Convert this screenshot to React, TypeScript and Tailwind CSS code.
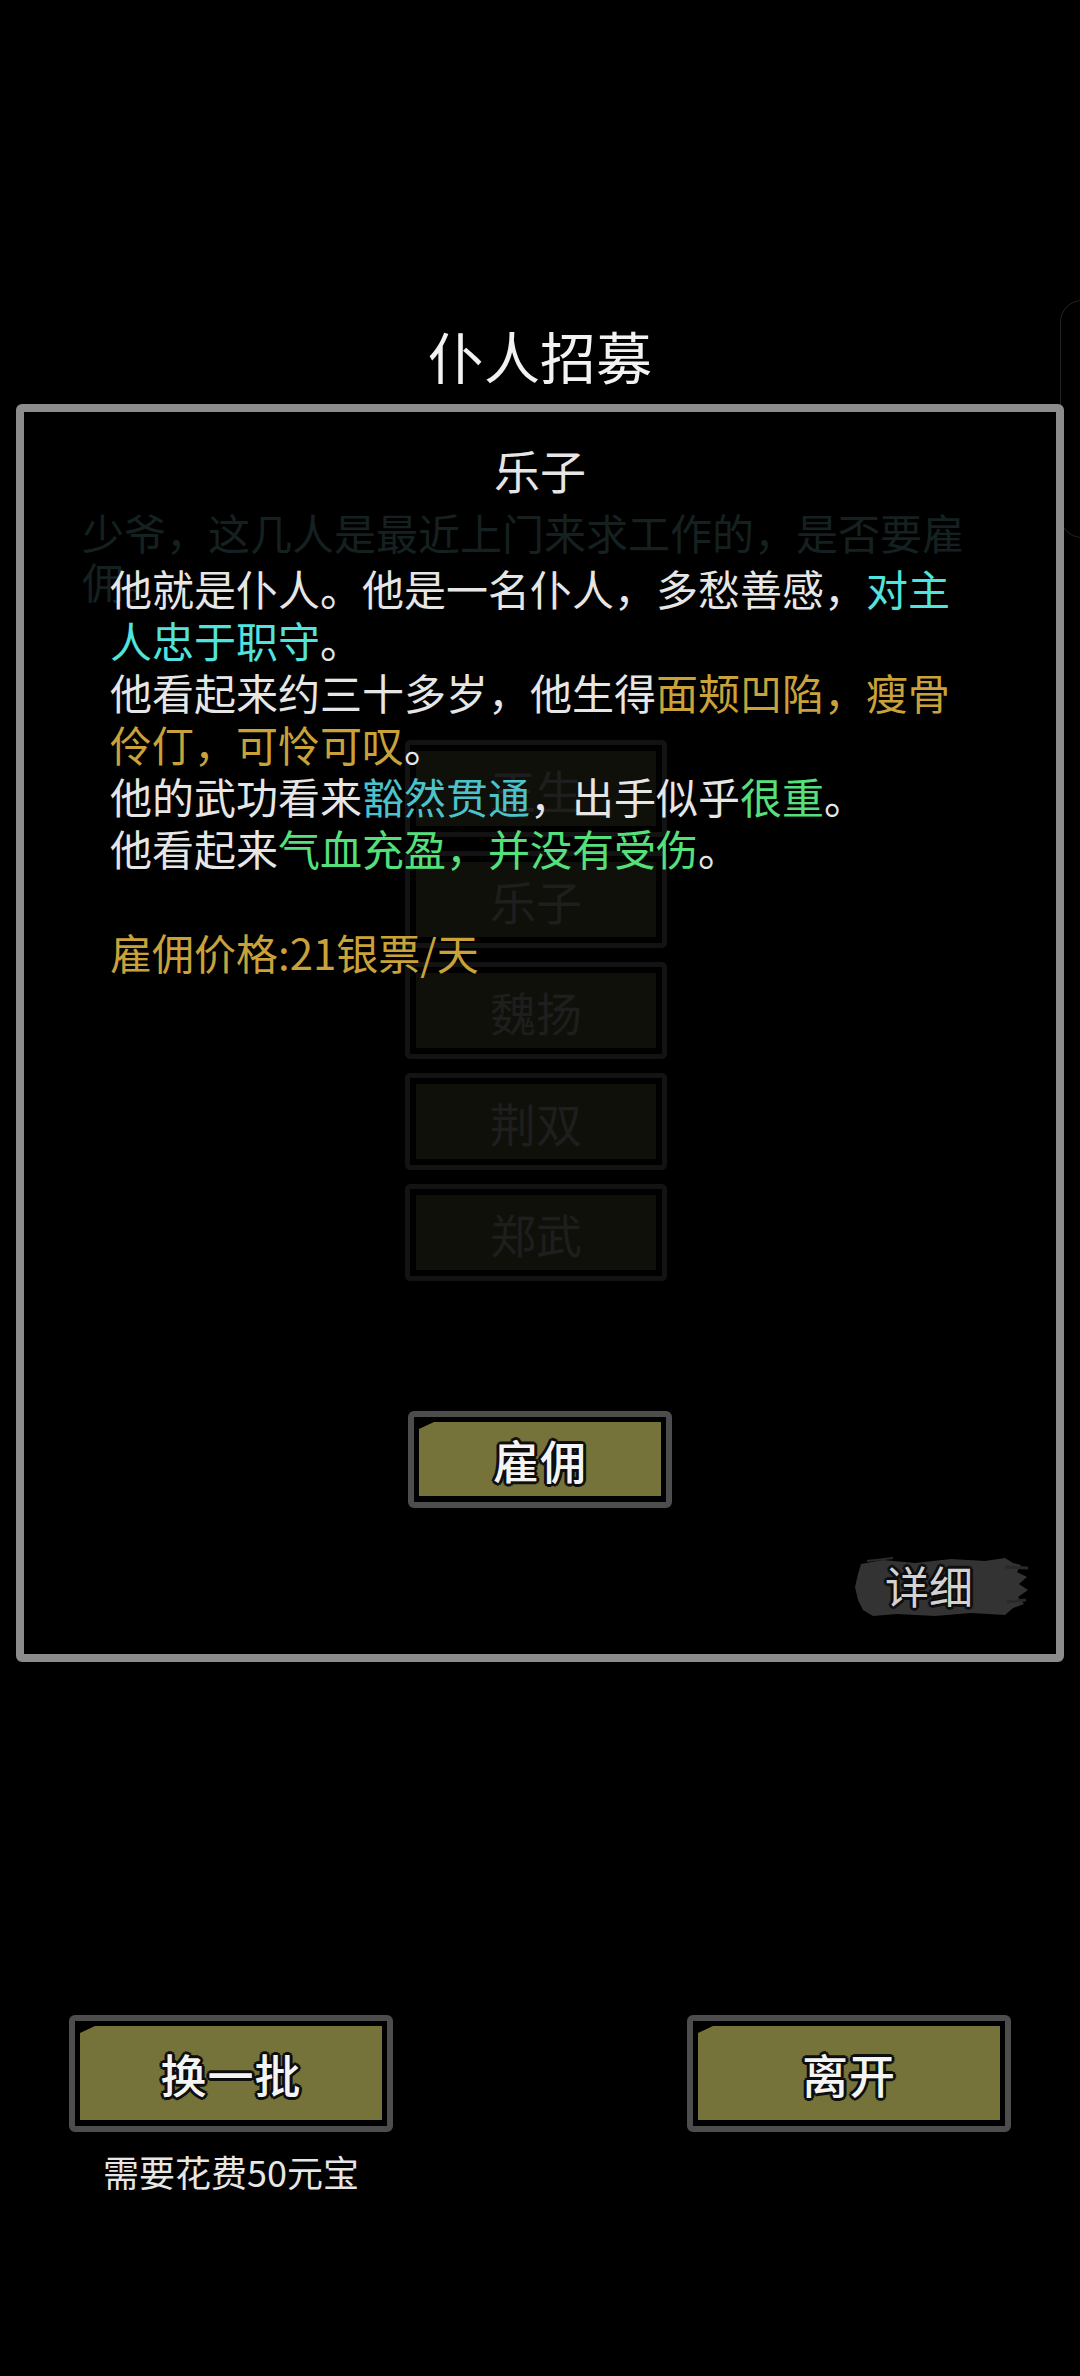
import React from "react";

const outline =
  "[text-shadow:0_0_3px_#000,3px_0_0_#111,-3px_0_0_#111,0_3px_0_#111,0_-3px_0_#111,2px_2px_0_#111,-2px_-2px_0_#111,2px_-2px_0_#111,-2px_2px_0_#111]";

function GameButton({
  label,
  outerClass,
}: {
  label: string;
  outerClass: string;
}) {
  return (
    <div
      className={
        "border-[6px] border-[#4d4d4d] rounded-[6px] bg-black pt-[5px] px-[5px] pb-[6px] flex " +
        outerClass
      }
    >
      <div className="flex-1 bg-[#76733a] [clip-path:polygon(15px_0,100%_0,100%_100%,0_100%,0_7px)] flex items-center justify-center">
        <span
          className={
            "text-[46px] leading-none font-medium text-[#f4f4f4] tracking-[1px] " +
            outline
          }
        >
          {label}
        </span>
      </div>
    </div>
  );
}

function FadedBox({ label }: { label: string }) {
  return (
    <div className="w-[262px] h-[97px] border-[5px] border-[#131313] rounded-[5px] p-[6px] flex">
      <div className="flex-1 bg-[#10100a] flex items-center justify-center">
        <span className="text-[46px] leading-none text-[#1e1e1e]">{label}</span>
      </div>
    </div>
  );
}

export default function App() {
  const gold = "text-[#c9a23a]";
  return (
    <div className="relative w-[1080px] h-[2376px] bg-black overflow-hidden flex flex-col font-['Noto_Sans_CJK_SC','Noto_Sans',sans-serif]">
      {/* faint side element at right edge */}
      <div className="absolute left-[1060px] top-[300px] w-[60px] h-[238px] rounded-[22px] border border-[#242424]" />

      <div className="mt-[322px] h-[66px] leading-[66px] text-center text-[56px] text-[#f2f2f2]">
        仆人招募
      </div>

      <div className="mt-[16px] ml-[16px] w-[1048px] h-[1258px] border-8 border-[#8c8c8c] rounded-[6px] relative flex flex-col">
        {/* faded background layer */}
        <div className="absolute inset-0 pointer-events-none">
          <p className="absolute left-[58px] top-[95px] w-[890px] text-[42px] leading-[49px] text-[#152020]">
            少爷，这几人是最近上门来求工作的，是否要雇佣。
          </p>
          <div className="absolute left-[381px] top-[328px] flex flex-col gap-[14px]">
            <FadedBox label="王生" />
            <FadedBox label="乐子" />
            <FadedBox label="魏扬" />
            <FadedBox label="荆双" />
            <FadedBox label="郑武" />
          </div>
        </div>

        <div className="relative mt-[27px] h-[60px] text-center text-[46px] leading-[60px] text-[#e6e6e6]">
          乐子
        </div>

        <div className="relative mt-[63px] ml-[86px] w-[850px] text-[42px] leading-[52px] text-[#e6e6e6]">
          <p>
            他就是仆人。他是一名仆人，多愁善感，
            <span className="text-[#52e3de]">对主人忠于职守</span>。
          </p>
          <p>
            他看起来约三十多岁，他生得
            <span className={gold}>面颊凹陷，瘦骨伶仃，可怜可叹</span>。
          </p>
          <p>
            他的武功看来<span className="text-[#4bc2cc]">豁然贯通</span>
            ，出手似乎<span className="text-[#55e07c]">很重</span>。
          </p>
          <p>
            他看起来
            <span className="text-[#55e07c]">气血充盈，并没有受伤</span>。
          </p>
          <p className={"mt-[52px] " + gold}>雇佣价格:21银票/天</p>
        </div>

        <div className="relative mt-[433px] self-center">
          <GameButton label="雇佣" outerClass="w-[264px] h-[97px]" />
        </div>

        <div className="relative mt-[46px] self-end mr-[27px] w-[176px] h-[66px]">
          <svg
            className="absolute inset-0"
            width="176"
            height="66"
            viewBox="0 0 176 66"
          >
            <path
              d="M8 10 L30 6 L62 9 L98 5 L132 7 L152 4 L160 9 L168 11 L164 18 L174 23 L166 30 L175 36 L165 43 L171 50 L160 54 L152 61 L118 59 L82 62 L44 60 L20 62 L10 56 L5 46 L2 33 L5 20 Z"
              fill="#333333"
            />
            <path d="M152 13 L175 14" stroke="#2a2a2a" strokeWidth="3" />
            <path d="M154 48 L173 46" stroke="#2a2a2a" strokeWidth="3" />
            <path d="M14 7 L40 4" stroke="#2b2b2b" strokeWidth="2" />
          </svg>
          <span
            className={
              "absolute left-[32px] top-[1px] text-[44px] leading-[60px] text-[#d2d2d2] " +
              outline
            }
          >
            详细
          </span>
        </div>
      </div>

      <div className="mt-[353px] px-[69px] flex justify-between">
        <div className="flex flex-col items-center">
          <GameButton label="换一批" outerClass="w-[324px] h-[117px]" />
          <div className="mt-[17px] text-[36px] leading-[44px] text-[#e6e6e6]">
            需要花费50元宝
          </div>
        </div>
        <GameButton label="离开" outerClass="w-[324px] h-[117px]" />
      </div>
    </div>
  );
}
